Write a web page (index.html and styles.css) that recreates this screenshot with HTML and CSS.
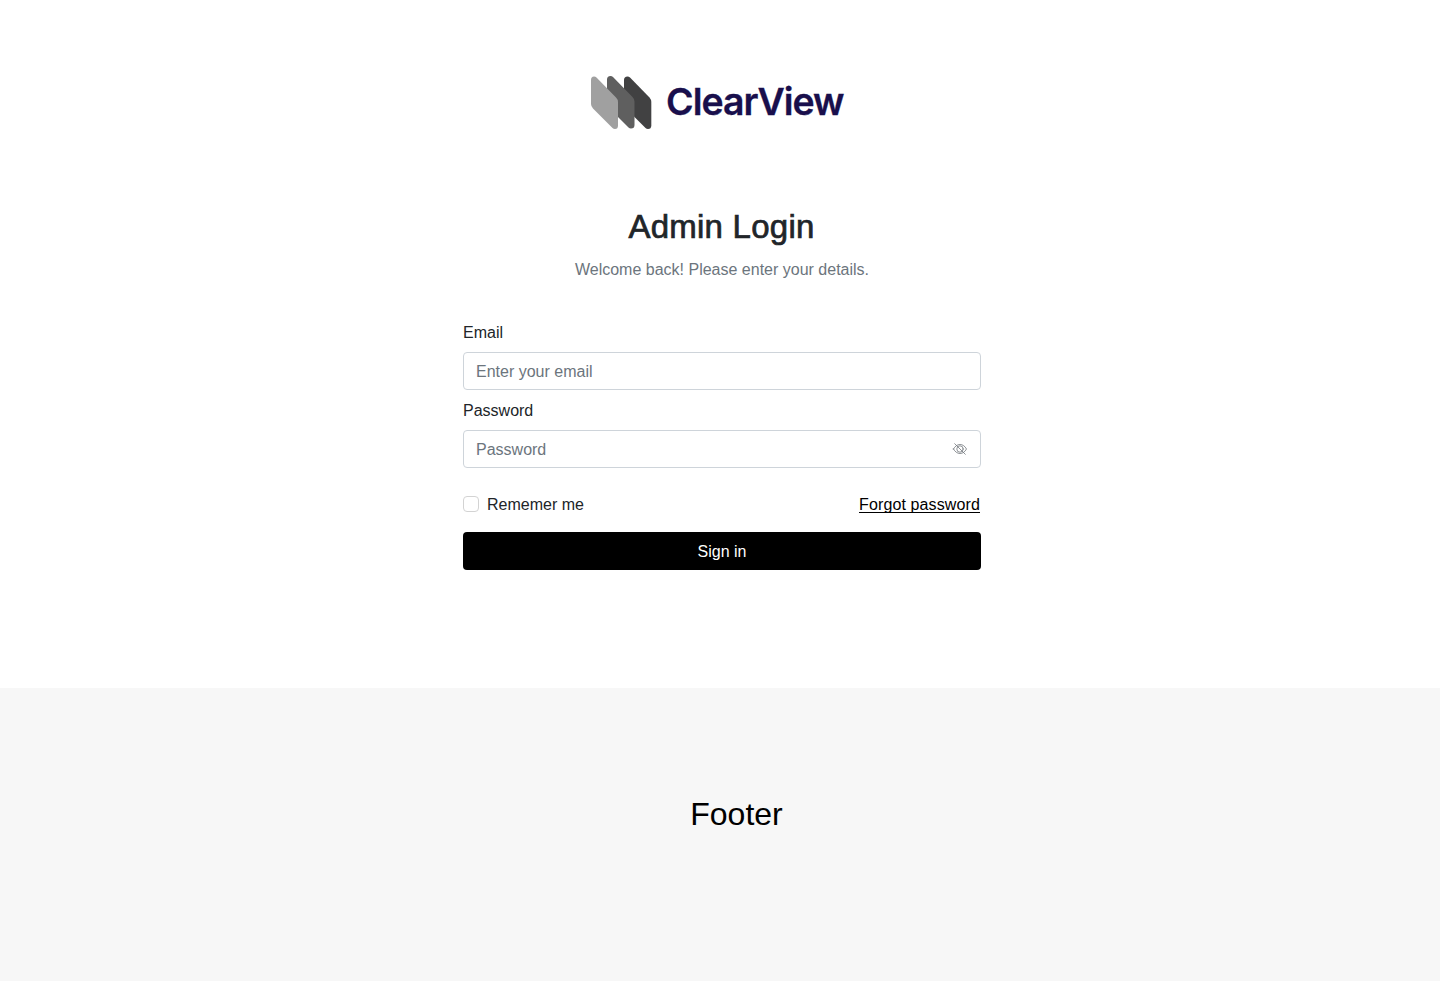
FILE: index.html
```html
<!DOCTYPE html>
<html lang="en">
<head>
<meta charset="utf-8">
<title>ClearView Admin Login</title>
<link rel="stylesheet" href="styles.css">
</head>
<body>
<main class="login">
  <div class="logo">
    <svg class="logo-mark" viewBox="0 0 62 56" aria-hidden="true">
      <path fill="#414142" d="M34 5Q34 1.500 37.500 1.500Q39 1.500 40 2.500L59.500 22.500Q61.300 24.500 61.300 27V50.500Q61.300 54 58 54Q56.500 54 55.500 53L36 33.500Q34 31.500 34 29Z"/>
      <path fill="#5f5f5f" d="M17 4.500Q17 1 20.500 1Q22 1 23 2L42.500 22Q44.500 24 44.500 26.500V50Q44.500 53.500 41 53.500Q39.500 53.500 38.500 52.500L19 33Q17 31 17 28.500Z"/>
      <path fill="#a0a0a0" d="M1 5Q1 1.500 4 1.500Q5.500 1.500 6.500 2.500L26 22.500Q28 24.500 28 27V50.500Q28 54 25 54Q23.500 54 22.500 53L3 33.500Q1 31.500 1 29Z"/>
    </svg>
    <span class="logo-text">ClearView</span>
  </div>
  <h1 class="title">Admin Login</h1>
  <p class="subtitle">Welcome back! Please enter your details.</p>
  <form class="form">
    <label class="label" for="email">Email</label>
    <input class="input input-email" id="email" type="email" placeholder="Enter your email">
    <label class="label" for="password">Password</label>
    <div class="password-field">
      <input class="input input-password" id="password" type="password" placeholder="Password">
      <svg class="eye" viewBox="0 0 16 16" aria-hidden="true">
        <path d="M1.500 8C3 5.200 5.300 3.500 8 3.500S13 5.200 14.500 8C13 10.800 10.700 12.500 8 12.500S3 10.800 1.500 8Z"/>
        <circle cx="8" cy="8" r="3.200"/>
        <path d="M2.700 2.700L13.300 13.300"/>
      </svg>
    </div>
    <div class="options">
      <label class="remember"><input class="check" type="checkbox"><span class="remember-text">Rememer me</span></label>
      <a class="forgot" href="#"><span class="forgot-text">Forgot password</span></a>
    </div>
    <button class="submit" type="button">Sign in</button>
  </form>
</main>
<footer class="footer"><span class="footer-text">Footer</span></footer>
</body>
</html>
```
FILE: styles.css
```css
* { box-sizing: border-box; }
body {
  margin: 0;
  min-height: 981px;
  display: flex;
  flex-direction: column;
  background: #fff;
  color: #212529;
  font: 16px/24px "Liberation Sans", Arial, sans-serif;
}
.login { width: 518px; height: 688px; margin-left: 463px; padding-top: 75px; }
.logo { display: flex; align-items: flex-start; height: 56px; margin-left: 127px; }
.logo-mark { width: 62px; height: 56px; flex: none; }
.logo-text {
  margin-left: 14px;
  padding-top: 4px;
  color: #190f4c;
  font: 600 37.5px/46px Inter, sans-serif;
  letter-spacing: -1px;
  -webkit-text-stroke: 0.3px currentColor;
}
.title {
  margin: 77px 1px 0 0;
  font-size: 33px;
  font-weight: 400;
  line-height: 38px;
  text-align: center;
  letter-spacing: 0.25px;
  -webkit-text-stroke: 0.7px currentColor;
}
.subtitle { margin: 12px 0 39px; color: #6c757d; text-align: center; }
.form { display: flex; flex-direction: column; }
.label { height: 24px; margin-bottom: 7px; }
.input {
  display: block;
  width: 100%;
  height: 38px;
  padding: 7px 12px 5px;
  border: 1px solid #ced4da;
  border-radius: 4px;
  background: #fff;
  color: #212529;
  font: inherit;
}
.input::placeholder { color: #6c757d; opacity: 1; }
.input-email { margin-bottom: 9px; }
.password-field { position: relative; }
.eye {
  position: absolute;
  top: 11px;
  right: 13px;
  width: 16px;
  height: 16px;
  fill: none;
  stroke: #72777c;
  stroke-width: 0.8;
  stroke-linecap: round;
}
.options { display: flex; justify-content: space-between; height: 24px; margin: 25px 1px 15px 0; }
.remember { display: flex; gap: 8px; }
.check {
  appearance: none;
  width: 16px;
  height: 16px;
  margin: 3px 0 0;
  border: 1px solid #d3d3d3;
  border-radius: 4px;
  background: #fff;
}
.forgot {
  color: #000;
  letter-spacing: 0.12px;
  text-underline-offset: 2px;
  text-decoration-thickness: 1px;
  text-decoration-skip-ink: none;
}
.submit {
  height: 38px;
  padding: 1px 0 0;
  border: 0;
  border-radius: 4px;
  background: #000;
  color: #fff;
  font: inherit;
}
.footer {
  height: 293px;
  padding: 102px 0 0 33px;
  background: #f7f7f7;
  color: #000;
  font-size: 32px;
  line-height: 48px;
  text-align: center;
}
```
